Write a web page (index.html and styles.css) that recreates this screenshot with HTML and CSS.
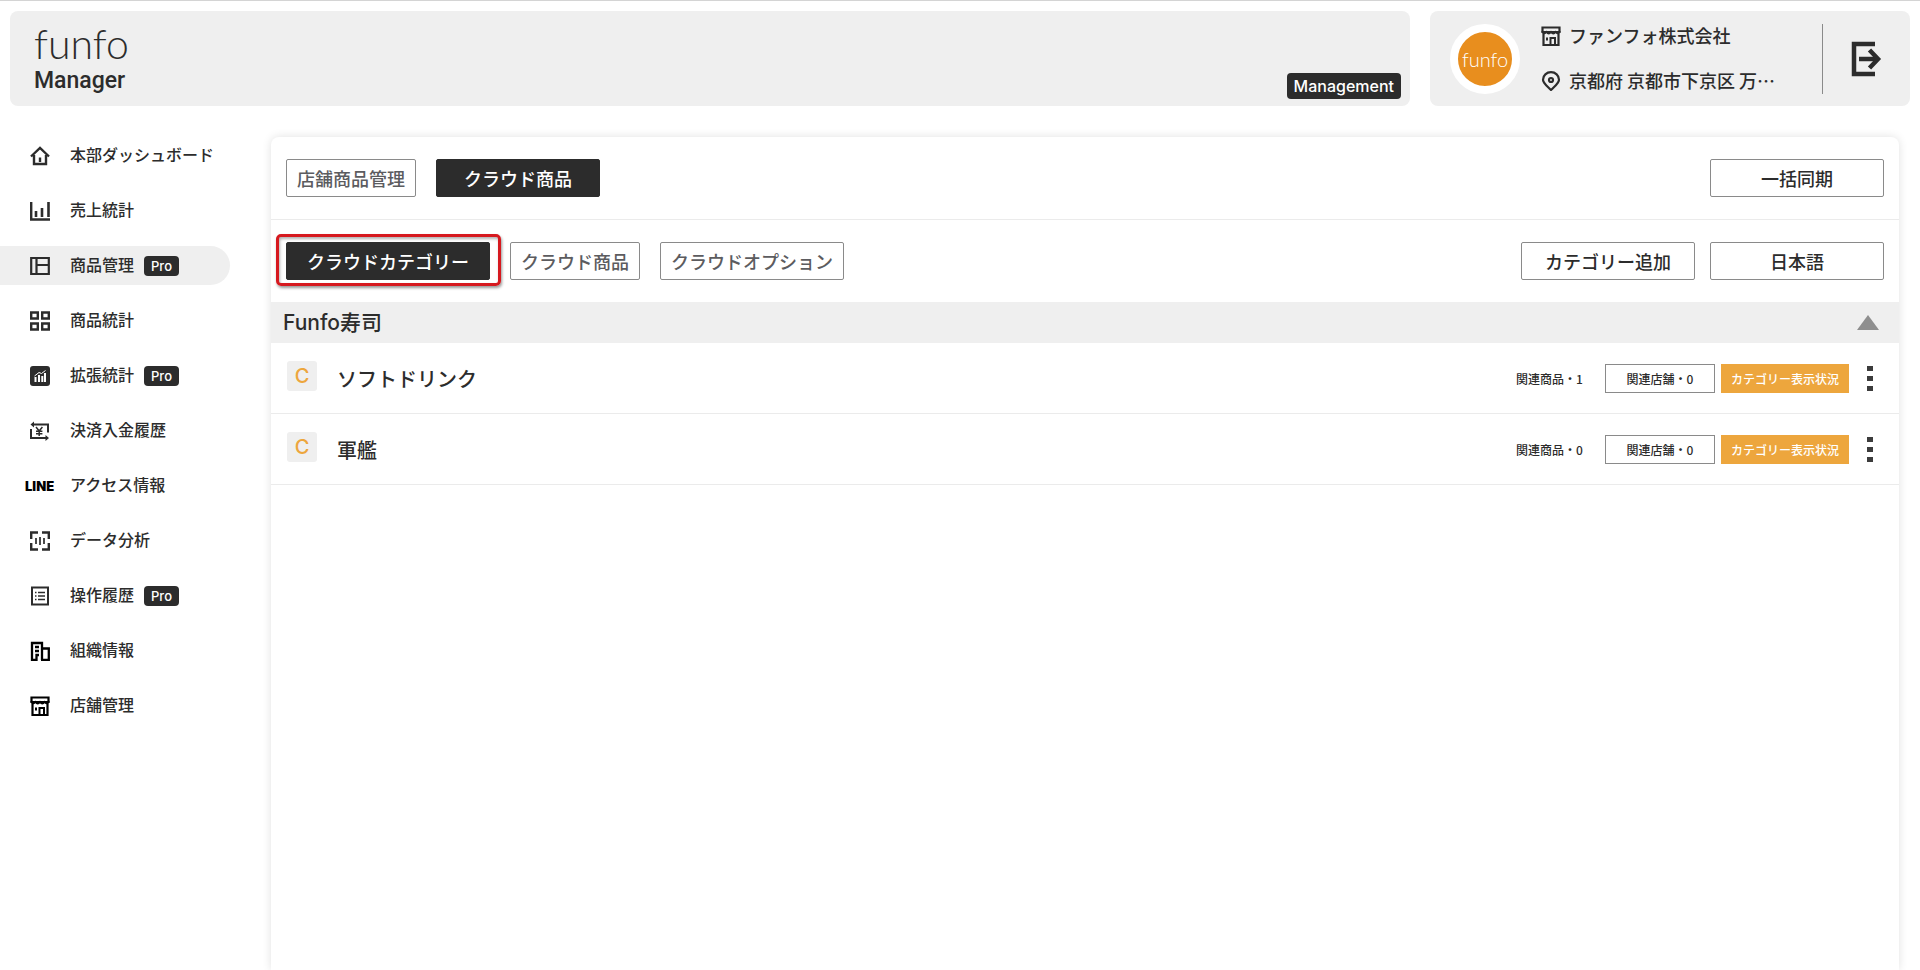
FILE: index.html
```html
<!DOCTYPE html>
<html lang="ja">
<head>
    <meta charset="UTF-8">
    <meta name="viewport" content="width=device-width, initial-scale=1.0">
    <title>funfo Manager</title>
    <link rel="stylesheet" href="styles.css">
</head>
<body>

<!-- Shared icons -->
<svg class="defs" width="0" height="0">
    <symbol id="icon-store" viewBox="0 0 20 20">
        <path d="M1.5 1.5H18.5V6H1.5Z M2.5 6V19H17.5V6" fill="none" stroke="currentColor" stroke-width="2.200"/>
        <path d="M1 5Q3 9 5.500 6Q7.700 9 10 6Q12.300 9 14.500 6Q17 9 19 5" fill="none" stroke="currentColor" stroke-width="1.800"/>
        <path d="M9.500 19V12H14V19" fill="none" stroke="currentColor" stroke-width="2"/>
        <path d="M5 11.500H7V14.500H5Z" fill="currentColor"/>
    </symbol>
</svg>

<header class="header">
    <div class="header-main">
        <a class="logo" href="#">
            <span class="logo-name">funfo</span>
            <span class="logo-sub">Manager</span>
        </a>
        <span class="badge badge-mode">Management</span>
    </div>
    <div class="header-user">
        <div class="avatar"><span>funfo</span></div>
        <div class="company">
            <div class="company-row">
                <svg class="icon"><use href="#icon-store"/></svg>
                <span>ファンフォ株式会社</span>
            </div>
            <div class="company-row">
                <svg class="icon" viewBox="0 0 20 20" fill="none" stroke="currentColor" stroke-width="2.200">
                    <path d="M10 19C5.500 14.500 2 12 2 8.700A8 7.500 0 0 1 18 8.700C18 12 14.500 14.500 10 19Z"/>
                    <circle cx="10" cy="9" r="2"/>
                </svg>
                <span>京都府 京都市下京区 万…</span>
            </div>
        </div>
        <button class="logout" aria-label="ログアウト">
            <svg width="32" height="36" viewBox="0 0 32 36" fill="none" stroke="currentColor" stroke-width="4.500">
                <path d="M24 3H3V33H24"/>
                <path d="M8 18H27"/>
                <path d="M18.500 9L27 18L18.500 27"/>
            </svg>
        </button>
    </div>
</header>

<div class="layout">
    <nav class="sidebar">
        <a class="nav-item" href="#">
            <svg class="icon" viewBox="0 0 20 20" fill="none" stroke="currentColor" stroke-width="2.400">
                <path d="M1 10.500L10 2L19 10.500"/>
                <path d="M4 9V18H16V9"/>
                <path d="M10 11.500V16"/>
            </svg>
            <span>本部ダッシュボード</span>
        </a>
        <a class="nav-item" href="#">
            <svg class="icon" viewBox="0 0 20 20" fill="none" stroke="currentColor" stroke-width="2.400">
                <path d="M1.200 1V18.500H20"/>
                <path d="M6 10V16M12 7V16M18.500 1V16" stroke-width="2.600"/>
            </svg>
            <span>売上統計</span>
        </a>
        <a class="nav-item active" href="#">
            <svg class="icon" viewBox="0 0 20 20" fill="none" stroke="currentColor" stroke-width="2.200">
                <path d="M1.200 2H18.800V18H1.200Z M6.500 2V18M6.500 9H19"/>
            </svg>
            <span>商品管理</span>
            <span class="badge">Pro</span>
        </a>
        <a class="nav-item" href="#">
            <svg class="icon" viewBox="0 0 20 20" fill="none" stroke="currentColor" stroke-width="2.400">
                <path d="M1.200 1.500H7.800V7.500H1.200Z M12.200 1.500H18.800V7.500H12.200Z M1.200 12.500H7.800V18.500H1.200Z M12.200 12.500H18.800V18.500H12.200Z"/>
            </svg>
            <span>商品統計</span>
        </a>
        <a class="nav-item" href="#">
            <svg class="icon" viewBox="0 0 20 20">
                <rect width="20" height="20" rx="3" fill="currentColor"/>
                <path d="M5.500 16V11M9 16V9M12.300 16V10M15 16V7" stroke="#fff" stroke-width="2"/>
                <path d="M4.500 10L9 6.500L11.500 7.500L15.500 4.500" stroke="#fff" stroke-width="1" fill="none"/>
            </svg>
            <span>拡張統計</span>
            <span class="badge">Pro</span>
        </a>
        <a class="nav-item" href="#">
            <svg class="icon" viewBox="0 0 20 20" fill="none" stroke="currentColor" stroke-width="2">
                <path d="M2 3.500H18V11.500M1 8V17H17"/>
                <path d="M4 0.500L0.500 3.500L4 6.500ZM15.500 14L19 17L15.500 20Z" fill="currentColor" stroke="none"/>
                <path d="M6 6L9.200 10L12.400 6M9.200 10V15M6 10.300H12.400M6 12.800H12.400" stroke-width="1.500"/>
            </svg>
            <span>決済入金履歴</span>
        </a>
        <a class="nav-item" href="#">
            <span class="line-mark">LINE</span>
            <span>アクセス情報</span>
        </a>
        <a class="nav-item" href="#">
            <svg class="icon" viewBox="0 0 20 20" fill="none" stroke="currentColor" stroke-width="2.400">
                <path d="M1.200 8V1.500H8M12 1.500H18.800V8M18.800 12V18.500H12M8 18.500H1.200V12"/>
                <path d="M6 7V13M10 6V14M14 7V13" stroke-width="1.700"/>
            </svg>
            <span>データ分析</span>
        </a>
        <a class="nav-item" href="#">
            <svg class="icon" viewBox="0 0 20 20" fill="none" stroke="currentColor" stroke-width="2">
                <path d="M2 1.500H18V18.500H2Z"/>
                <path d="M5 6.500H6.500M8 6.500H15M5 10H6.500M8 10H15M5 13.500H6.500M8 13.500H15" stroke-width="1.600"/>
            </svg>
            <span>操作履歴</span>
            <span class="badge">Pro</span>
        </a>
        <a class="nav-item dark" href="#">
            <svg class="icon" viewBox="0 0 20 20" fill="none" stroke="currentColor" stroke-width="2.300">
                <path d="M12 19V2H2V19H6.500V14H9M12 7.500H18.800V19H11"/>
                <path d="M5 6H9M5 10H9"/>
            </svg>
            <span>組織情報</span>
        </a>
        <a class="nav-item dark" href="#">
            <svg class="icon"><use href="#icon-store"/></svg>
            <span>店舗管理</span>
        </a>
    </nav>

    <main class="card">
        <div class="toolbar">
            <button class="tab">店舗商品管理</button>
            <button class="tab selected wide">クラウド商品</button>
            <div class="actions">
                <button class="action">一括同期</button>
            </div>
        </div>
        <div class="toolbar sub">
            <button class="tab selected marked">クラウドカテゴリー</button>
            <button class="tab">クラウド商品</button>
            <button class="tab">クラウドオプション</button>
            <div class="actions">
                <button class="action">カテゴリー追加</button>
                <button class="action">日本語</button>
            </div>
        </div>

        <section>
            <div class="group-head">
                <h2>Funfo寿司</h2>
                <button class="collapse" aria-label="折りたたむ"></button>
            </div>
            <ul class="categories">
                <li class="category">
                    <span class="category-mark">C</span>
                    <span class="category-name">ソフトドリンク</span>
                    <span class="related">関連商品・1</span>
                    <button class="small">関連店舗・0</button>
                    <button class="small status">カテゴリー表示状況</button>
                    <button class="more" aria-label="メニュー"><i></i><i></i><i></i></button>
                </li>
                <li class="category">
                    <span class="category-mark">C</span>
                    <span class="category-name">軍艦</span>
                    <span class="related">関連商品・0</span>
                    <button class="small">関連店舗・0</button>
                    <button class="small status">カテゴリー表示状況</button>
                    <button class="more" aria-label="メニュー"><i></i><i></i><i></i></button>
                </li>
            </ul>
        </section>
    </main>
</div>

</body>
</html>
```
FILE: styles.css
```css
* {
    box-sizing: border-box;
}
body {
    display: flex;
    flex-direction: column;
    min-height: 100vh;
    margin: 0;
    border-top: 1px solid #d4d4d4;
    background-color: #fff;
    color: #2c2c2c;
    font-family: "Noto Sans CJK JP", sans-serif;
    font-size: 16px;
    font-weight: 500;
}
button {
    padding: 0;
    border: none;
    background: none;
    color: inherit;
    font: inherit;
    cursor: pointer;
}
a {
    color: inherit;
    text-decoration: none;
}
.defs {
    position: absolute;
}
.icon {
    flex: none;
    width: 20px;
    height: 20px;
}

/* Header */
.header {
    display: flex;
    gap: 20px;
    padding: 10px 10px 0;
}
.header-main,
.header-user {
    display: flex;
    height: 95px;
    border-radius: 8px;
    background-color: #efefef;
}
.header-main {
    flex: 1;
    justify-content: space-between;
    align-items: flex-end;
    padding: 0 9px 7px 24px;
}
.logo {
    display: flex;
    flex-direction: column;
    align-self: flex-start;
    padding-top: 10px;
}
.logo-name {
    font-family: Lato, sans-serif;
    font-size: 41px;
    font-weight: 300;
    line-height: 46px;
}
.logo-sub {
    font-family: Roboto, sans-serif;
    font-size: 23px;
    font-weight: 500;
    line-height: 28px;
}
.badge {
    padding: 0 7px;
    border-radius: 4px;
    background-color: #2c2c2c;
    color: #fff;
    font-family: Inter, sans-serif;
    font-size: 13px;
    font-weight: 500;
    line-height: 20px;
}
.badge-mode {
    padding: 0 7px;
    font-size: 16px;
    line-height: 26px;
}
.header-user {
    align-items: center;
    width: 480px;
    padding-left: 20px;
}
.avatar {
    display: flex;
    justify-content: center;
    align-items: center;
    width: 70px;
    height: 70px;
    border: 8px solid #fff;
    border-radius: 50%;
    background-color: #e88e1e;
    color: #fff;
    font-family: Lato, sans-serif;
    font-size: 20px;
    font-weight: 300;
}
.company {
    display: flex;
    flex: 1;
    flex-direction: column;
    gap: 17px;
    padding-left: 21px;
    font-size: 18px;
    line-height: 26px;
}
.company-row {
    display: flex;
    align-items: center;
    gap: 8px;
}
.company-row span {
    padding-bottom: 2px;
}
.logout {
    display: flex;
    justify-content: center;
    align-items: center;
    width: 88px;
    height: 70px;
    border-left: 1px solid #8a8a8a;
}

/* Sidebar */
.layout {
    display: flex;
    flex: 1;
}
.sidebar {
    display: flex;
    flex-direction: column;
    gap: 16px;
    width: 230px;
    padding-top: 30px;
}
.nav-item {
    display: flex;
    align-items: center;
    height: 39px;
    padding-left: 30px;
    border-radius: 0 20px 20px 0;
}
.nav-item span {
    padding-bottom: 3px;
}
.nav-item .icon {
    margin-right: 20px;
}
.nav-item .badge {
    margin-left: 10px;
    padding-bottom: 0;
}
.nav-item.active {
    background-color: #efefef;
}
.nav-item.dark .icon {
    color: #000;
}
.nav-item .line-mark {
    width: 45px;
    margin-left: -5px;
    padding-bottom: 0;
    color: #000;
    font-family: Inter, sans-serif;
    font-size: 13px;
    font-weight: 900;
}

/* Main card */
.card {
    flex: 1;
    margin: 31px 21px 0 41px;
    border-radius: 8px 8px 0 0;
    box-shadow: 0 0 10px rgba(0, 0, 0, 0.12);
}
.toolbar {
    display: flex;
    align-items: center;
    gap: 20px;
    height: 82px;
    padding: 0 15px;
}
.toolbar.sub {
    height: 83px;
    border-top: 1px solid #ebebeb;
}
.tab,
.action {
    height: 38px;
    padding: 0 10px;
    border: 1px solid #8a8a8a;
    border-radius: 2px;
    color: #5c5c5f;
    font-size: 18px;
    line-height: 36px;
}
.tab.selected {
    padding: 0 20px;
    border-color: #2c2c2c;
    background-color: #2c2c2c;
    color: #fff;
}
.tab.wide {
    padding: 0 27px;
}
/* Highlight frame around the current tab */
.tab.marked {
    position: relative;
}
.tab.marked::after {
    content: "";
    position: absolute;
    inset: -9px -12px -7px -11px;
    border: 3px solid #d6191f;
    border-radius: 5px;
    box-shadow: 1px 2px 3px rgba(0, 0, 0, 0.4), inset 1px 2px 3px rgba(0, 0, 0, 0.3);
}
.actions {
    display: flex;
    gap: 15px;
    margin-left: auto;
}
.action {
    width: 174px;
    color: #2c2c2c;
}

/* Category list */
.group-head {
    display: flex;
    justify-content: space-between;
    align-items: center;
    height: 41px;
    padding: 0 20px 0 12px;
    background-color: #efefef;
}
.group-head h2 {
    margin: 0;
    font-family: Inter, "Noto Sans CJK JP", sans-serif;
    font-size: 21px;
    font-weight: 500;
    line-height: 28px;
}
.collapse {
    border-right: 11px solid transparent;
    border-bottom: 15px solid #8e8e8e;
    border-left: 11px solid transparent;
}
.categories {
    margin: 0;
    padding: 0;
    list-style: none;
}
.category {
    display: flex;
    align-items: center;
    height: 71px;
    padding: 0 26px 0 16px;
    border-bottom: 1px solid #ebebeb;
}
.category-mark {
    width: 30px;
    margin: 0 20px 4px 0;
    border-radius: 3px;
    background-color: #efefef;
    color: #eda63d;
    font-family: Inter, sans-serif;
    font-size: 20px;
    line-height: 30px;
    text-align: center;
}
.category-name {
    flex: 1;
    font-size: 20px;
}
.related {
    width: 89px;
    font-size: 12px;
}
.small {
    width: 110px;
    height: 29px;
    border: 1px solid #8a8a8a;
    font-size: 12px;
}
.small.status {
    width: 128px;
    margin: 0 18px 0 6px;
    border: none;
    background-color: #eda63d;
    color: #fff;
}
.more {
    display: flex;
    flex-direction: column;
    gap: 5px;
}
.more i {
    width: 6px;
    height: 5px;
    background-color: #3c3c3c;
}
```
